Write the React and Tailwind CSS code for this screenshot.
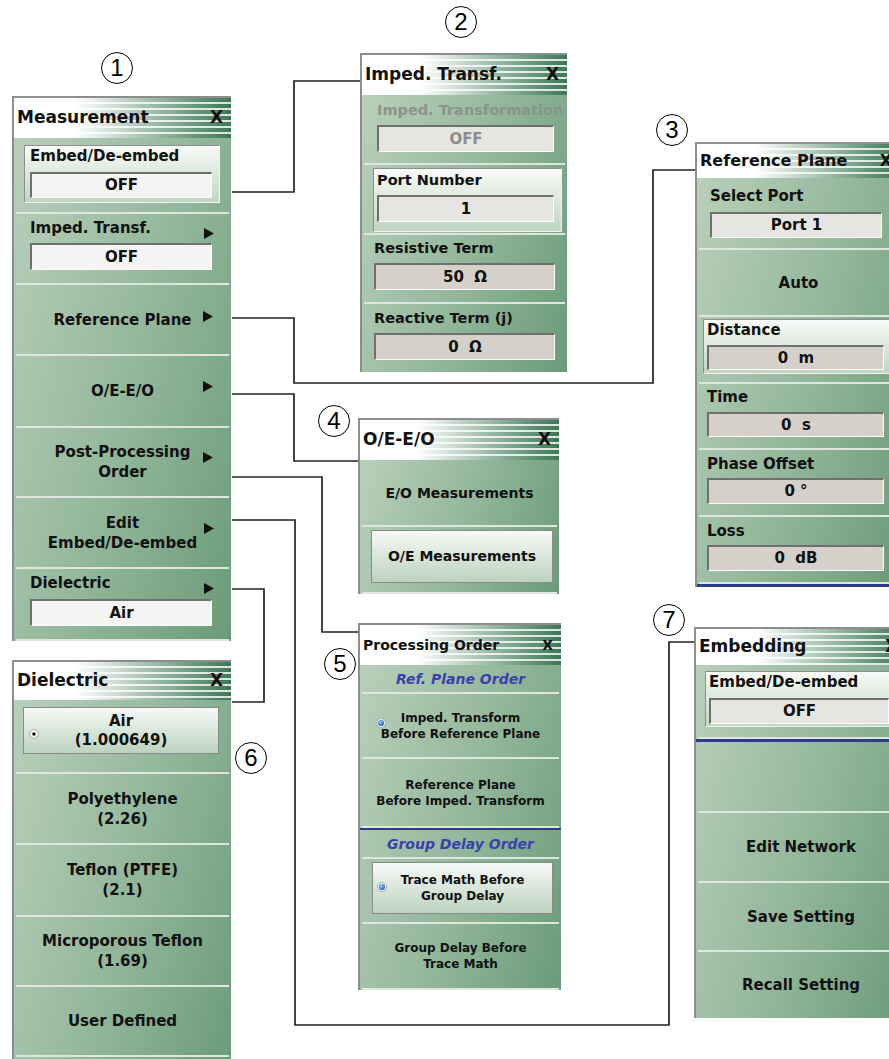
import React from 'react';

const FONT = "font-['DejaVu_Sans',Verdana,sans-serif]";

// little black "more" triangle at the right side of a menu key
const Arrow = ({ className = '' }) => (
  <svg className={`absolute ${className}`} width="10" height="11" viewBox="0 0 10 11">
    <polygon points="0,0 10,5.5 0,11" fill="#111" />
  </svg>
);

const RadioDot = ({ className = '' }) => (
  <svg className={`absolute ${className}`} width="10" height="10" viewBox="0 0 10 10">
    <circle cx="5" cy="5" r="4.3" fill="#fafafa" stroke="#9a9a9a" strokeWidth="0.8" />
    <circle cx="5" cy="5" r="1.8" fill="#111" />
  </svg>
);

const RadioBlue = ({ className = '' }) => (
  <svg className={`absolute ${className}`} width="10" height="10" viewBox="0 0 10 10">
    <defs>
      <radialGradient id="rb" cx="40%" cy="35%" r="65%">
        <stop offset="0%" stopColor="#9fd0ff" />
        <stop offset="100%" stopColor="#1b5fae" />
      </radialGradient>
    </defs>
    <circle cx="5" cy="5" r="4.6" fill="#e4ecf2" stroke="#8ea0a8" strokeWidth="0.7" />
    <circle cx="5" cy="5" r="3" fill="url(#rb)" />
  </svg>
);

const Num = ({ n, className = '' }) => (
  <div
    className={`absolute flex h-[32px] w-[32px] items-center justify-center rounded-full border-[1.5px] border-black bg-white text-[24px] leading-none text-black font-['Liberation_Sans',Arial,sans-serif] ${className}`}
  >
    {n}
  </div>
);

const Divider = () => <div className="mx-[2px] h-[2px] bg-[#dde7dd]" />;
const BlueLine = ({ h = 'h-[3px]' }) => <div className={`${h} bg-[#2f3b88]`} />;

const fieldTones = {
  white: 'bg-[#f4f4f2]',
  light: 'bg-[#e6e5e1]',
  gray: 'bg-[#d5d1ca]',
};

function Field({ value, tone = 'white', dim = false, className = '' }) {
  return (
    <div
      className={`flex items-center justify-center whitespace-pre border-t-2 border-l-2 border-r border-b border-t-[#6f6f6f] border-l-[#6f6f6f] border-r-[#fbfbfb] border-b-[#fbfbfb] text-[15px] font-bold ${fieldTones[tone]} ${dim ? 'text-[#8d8d8d]' : 'text-[#111]'} ${className}`}
    >
      {value}
    </div>
  );
}

// lighter framed group (label + field together)
const Box = ({ className = '', children }) => (
  <div
    className={`border border-t-[#8e8e8e] border-l-[#8e8e8e] border-r-[#f2f2f2] border-b-[#f2f2f2] bg-[linear-gradient(to_bottom,#f8faf8,#c1d5c2)] ${className}`}
  >
    {children}
  </div>
);

// pressed / selected key
const Pressed = ({ className = '', children }) => (
  <div
    className={`relative flex flex-col items-center justify-center border border-[#8a8a8a] bg-[linear-gradient(to_bottom,#f7f9f7,#bcd2be)] text-center ${className}`}
  >
    {children}
  </div>
);

function Panel({ className = '', title, titleH = 'h-[40px]', titleSize = 'text-[17px]', children }) {
  return (
    <div className={`absolute flex flex-col border-t-2 border-l-2 border-[#8d8d8d] ${className}`}>
      <div
        className={`flex shrink-0 items-center justify-between whitespace-nowrap pl-[3px] pr-[8px] font-bold text-[#111] ${titleH} ${titleSize} bg-[image:repeating-linear-gradient(to_bottom,transparent_0px,transparent_4px,rgba(255,255,255,0.8)_4px,rgba(255,255,255,0.8)_6px),linear-gradient(to_right,#ffffff_28%,#3c7854_100%)]`}
      >
        <span>{title}</span>
        <span>X</span>
      </div>
      <div className="flex flex-col font-bold text-[#111] bg-[linear-gradient(105deg,#b9cfba_0%,#95b89d_50%,#6b9b79_100%)]">
        {children}
      </div>
    </div>
  );
}

const Center = ({ h, size = 'text-[15px]', lead = 'leading-[20px]', children }) => (
  <div className={`relative flex items-center justify-center text-center ${h} ${size} ${lead}`}>{children}</div>
);

export default function App() {
  return (
    <div className={`relative h-[1059px] w-[889px] overflow-hidden bg-white ${FONT}`}>
      {/* connector lines */}
      <svg className="absolute left-0 top-0" width="889" height="1059">
        <g fill="none" stroke="#222" strokeWidth="1.7">
          <polyline points="232,192 294,192 294,81 360,81" />
          <polyline points="232,318 294,318 294,383 653,383 653,170 695,170" />
          <polyline points="232,394 294,394 294,461 358,461" />
          <polyline points="232,477 322,477 322,632 358,632" />
          <polyline points="232,520 295,520 295,1025 669,1025 669,642 694,642" />
          <polyline points="232,589 264,589 264,702 232,702" />
        </g>
      </svg>

      <Num n="1" className="left-[101px] top-[52px]" />
      <Num n="2" className="left-[445px] top-[6px]" />
      <Num n="3" className="left-[656px] top-[114px]" />
      <Num n="4" className="left-[318px] top-[405px]" />
      <Num n="5" className="left-[324px] top-[648px]" />
      <Num n="6" className="left-[235px] top-[742px]" />
      <Num n="7" className="left-[653px] top-[604px]" />

      {/* 1 Measurement */}
      <Panel className="left-[12px] top-[96px] w-[219px]" title="Measurement">
        <div className="h-[74px] pt-[7px] pl-[10px]">
          <Box className="h-[58px] w-[196px] px-[5px]">
            <div className="h-[20px] text-[15px] leading-[20px]">Embed/De-embed</div>
            <Field className="mt-[6px] h-[26px] w-[182px]" value="OFF" />
          </Box>
        </div>
        <Divider />
        <div className="relative h-[69px] pt-[4px] pl-[16px]">
          <div className="h-[20px] text-[15px] leading-[20px]">Imped. Transf.</div>
          <Field className="mt-[5px] h-[27px] w-[182px]" value="OFF" />
          <Arrow className="left-[190px] top-[14px]" />
        </div>
        <Divider />
        <Center h="h-[69px]">
          Reference Plane
          <Arrow className="left-[189px] top-[26px]" />
        </Center>
        <Divider />
        <Center h="h-[70px]">
          O/E-E/O
          <Arrow className="left-[189px] top-[25px]" />
        </Center>
        <Divider />
        <Center h="h-[68px]">
          <span>
            Post-Processing
            <br />
            Order
          </span>
          <Arrow className="left-[189px] top-[24px]" />
        </Center>
        <Divider />
        <Center h="h-[69px]">
          <span>
            Edit
            <br />
            Embed/De-embed
          </span>
          <Arrow className="left-[190px] top-[25px]" />
        </Center>
        <Divider />
        <div className="relative h-[70px] pt-[4px] pl-[16px]">
          <div className="h-[20px] text-[15px] leading-[20px]">Dielectric</div>
          <Field className="mt-[6px] h-[27px] w-[182px]" value="Air" />
          <Arrow className="left-[190px] top-[14px]" />
        </div>
        <Divider />
      </Panel>

      {/* 2 Imped. Transf. */}
      <Panel className="left-[360px] top-[53px] w-[207px]" title="Imped. Transf.">
        <div className="h-[68px] overflow-hidden pt-[5px] pl-[15px]">
          <div className="h-[20px] whitespace-nowrap text-[14.5px] leading-[20px] text-[#8a948a]">
            Imped. Transformation
          </div>
          <Field className="mt-[5px] h-[27px] w-[177px]" value="OFF" tone="light" dim />
        </div>
        <Divider />
        <div className="h-[68px] pt-[3px] pl-[11px]">
          <Box className="h-[64px] w-[189px] px-[3px]">
            <div className="mt-[1px] h-[20px] text-[14.5px] leading-[20px]">Port Number</div>
            <Field className="mt-[5px] h-[27px] w-[177px]" value="1" tone="light" />
          </Box>
        </div>
        <Divider />
        <div className="h-[67px] pt-[3px] pl-[12px]">
          <div className="h-[20px] text-[14.5px] leading-[20px]">Resistive Term</div>
          <Field className="mt-[5px] h-[27px] w-[181px]" value="50  Ω" tone="gray" />
        </div>
        <Divider />
        <div className="h-[68px] pt-[4px] pl-[12px]">
          <div className="h-[20px] text-[14.5px] leading-[20px]">Reactive Term (j)</div>
          <Field className="mt-[5px] h-[27px] w-[181px]" value="0  Ω" tone="gray" />
        </div>
      </Panel>

      {/* 3 Reference Plane */}
      <Panel className="left-[695px] top-[142px] w-[205px]" title="Reference Plane" titleH="h-[34px]" titleSize="text-[16px]">
        <div className="h-[70px] pt-[8px] pl-[13px]">
          <div className="h-[20px] text-[15px] leading-[20px]">Select Port</div>
          <Field className="mt-[6px] h-[26px] w-[172px]" value="Port 1" tone="light" />
        </div>
        <Divider />
        <Center h="h-[65px]">Auto</Center>
        <Divider />
        <div className="h-[65px] pt-[2px] pl-[6px]">
          <Box className="h-[55px] w-[187px] px-[3px]">
            <div className="h-[20px] text-[15px] leading-[20px]">Distance</div>
            <Field className="mt-[5px] h-[25px] w-[177px]" value="0  m" tone="gray" />
          </Box>
        </div>
        <Divider />
        <div className="h-[64px] pt-[3px] pl-[10px]">
          <div className="h-[20px] text-[15px] leading-[20px]">Time</div>
          <Field className="mt-[5px] h-[25px] w-[177px]" value="0  s" tone="gray" />
        </div>
        <Divider />
        <div className="h-[65px] pt-[4px] pl-[10px]">
          <div className="h-[20px] text-[15px] leading-[20px]">Phase Offset</div>
          <Field className="mt-[4px] h-[26px] w-[177px]" value="0 °" tone="gray" />
        </div>
        <Divider />
        <div className="h-[65px] pt-[4px] pl-[10px]">
          <div className="h-[20px] text-[15px] leading-[20px]">Loss</div>
          <Field className="mt-[4px] h-[26px] w-[177px]" value="0  dB" tone="gray" />
        </div>
        <Divider />
        <BlueLine />
      </Panel>

      {/* 4 O/E-E/O */}
      <Panel className="left-[358px] top-[418px] w-[201px]" title="O/E-E/O">
        <Center h="h-[65px]" size="text-[14px]">E/O Measurements</Center>
        <Divider />
        <div className="h-[65px] pt-[3px] pl-[11px]">
          <Pressed className="h-[53px] w-[182px] text-[14px]">O/E Measurements</Pressed>
        </div>
        <Divider />
      </Panel>

      {/* 5 Processing Order */}
      <Panel className="left-[358px] top-[623px] w-[203px]" title="Processing Order" titleSize="text-[14px]">
        <Center h="h-[27px]" size="text-[14px]">
          <span className="italic text-[#3b40ae]">Ref. Plane Order</span>
        </Center>
        <Divider />
        <Center h="h-[63px]" size="text-[12px]" lead="leading-[16px]">
          <span>
            Imped. Transform
            <br />
            Before Reference Plane
          </span>
          <RadioBlue className="left-[16px] top-[24px]" />
        </Center>
        <Divider />
        <Center h="h-[67px]" size="text-[12px]" lead="leading-[16px]">
          <span>
            Reference Plane
            <br />
            Before Imped. Transform
          </span>
        </Center>
        <Divider />
        <BlueLine h="h-[2px]" />
        <Center h="h-[27px]" size="text-[14px]">
          <span className="italic text-[#3b40ae]">Group Delay Order</span>
        </Center>
        <Divider />
        <div className="h-[63px] pt-[3px] pl-[12px]">
          <Pressed className="h-[52px] w-[181px] text-[12px] leading-[16px]">
            <span>
              Trace Math Before
              <br />
              Group Delay
            </span>
            <RadioBlue className="left-[4px] top-[19px]" />
          </Pressed>
        </div>
        <Divider />
        <Center h="h-[64px]" size="text-[12px]" lead="leading-[16px]">
          <span>
            Group Delay Before
            <br />
            Trace Math
          </span>
        </Center>
        <Divider />
      </Panel>

      {/* 6 Dielectric */}
      <Panel className="left-[12px] top-[660px] w-[219px]" title="Dielectric" titleH="h-[38px]">
        <div className="h-[72px] pt-[7px] pl-[9px]">
          <Pressed className="h-[47px] w-[196px] text-[15px] leading-[19px]">
            <span>
              Air
              <br />
              (1.000649)
            </span>
            <RadioDot className="left-[5px] top-[21px]" />
          </Pressed>
        </div>
        <Divider />
        <Center h="h-[69px]">
          <span>
            Polyethylene
            <br />
            (2.26)
          </span>
        </Center>
        <Divider />
        <Center h="h-[70px]">
          <span>
            Teflon (PTFE)
            <br />
            (2.1)
          </span>
        </Center>
        <Divider />
        <Center h="h-[68px]">
          <span>
            Microporous Teflon
            <br />
            (1.69)
          </span>
        </Center>
        <Divider />
        <Center h="h-[68px]">User Defined</Center>
        <Divider />
        <div className="h-[20px]" />
      </Panel>

      {/* 7 Embedding */}
      <Panel className="left-[694px] top-[627px] w-[212px]" title="Embedding" titleH="h-[36px]">
        <div className="h-[72px] pt-[6px] pl-[9px]">
          <Box className="h-[56px] w-[200px] px-[3px]">
            <div className="h-[20px] text-[15px] leading-[20px]">Embed/De-embed</div>
            <Field className="mt-[6px] h-[26px] w-[180px]" value="OFF" tone="light" />
          </Box>
        </div>
        <Divider />
        <BlueLine />
        <div className="h-[69px]" />
        <Divider />
        <Center h="h-[68px]">Edit Network</Center>
        <Divider />
        <Center h="h-[67px]">Save Setting</Center>
        <Divider />
        <Center h="h-[66px]">Recall Setting</Center>
      </Panel>
    </div>
  );
}
